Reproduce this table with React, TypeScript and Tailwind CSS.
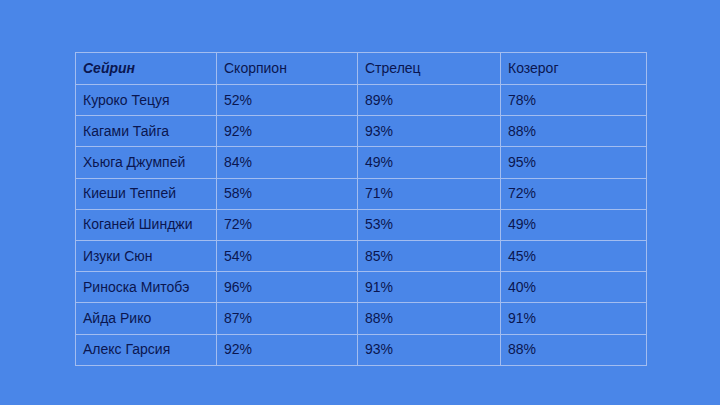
const header = ['Сейрин', 'Скорпион', 'Стрелец', 'Козерог'];

const rows: [string, string, string, string][] = [
  ['Куроко Тецуя', '52%', '89%', '78%'],
  ['Кагами Тайга', '92%', '93%', '88%'],
  ['Хьюга Джумпей', '84%', '49%', '95%'],
  ['Киеши Теппей', '58%', '71%', '72%'],
  ['Коганей Шинджи', '72%', '53%', '49%'],
  ['Изуки Сюн', '54%', '85%', '45%'],
  ['Риноска Митобэ', '96%', '91%', '40%'],
  ['Айда Рико', '87%', '88%', '91%'],
  ['Алекс Гарсия', '92%', '93%', '88%'],
];

export default function App() {
  return (
    <div className="w-[720px] h-[405px] bg-[#4a86e8] pt-[52px] pl-[75px] font-['Liberation_Sans',Arial,sans-serif] text-[14px] text-[#0a1650]">
      <table className="border-collapse border border-[#a3bdf0] w-[571px] table-fixed">
        <colgroup>
          <col className="w-[141px]" />
          <col className="w-[141px]" />
          <col className="w-[143px]" />
          <col className="w-[146px]" />
        </colgroup>
        <thead>
          <tr className="h-[32px]">
            {header.map((h, i) => (
              <th
                key={h}
                className={`border border-[#a3bdf0] px-[7px] text-left align-middle ${
                  i === 0 ? 'font-bold italic' : 'font-normal'
                }`}
              >
                {h}
              </th>
            ))}
          </tr>
        </thead>
        <tbody>
          {rows.map((r) => (
            <tr key={r[0]} className="h-[31.2px]">
              {r.map((c, i) => (
                <td key={i} className="border border-[#a3bdf0] px-[7px] align-middle">
                  {c}
                </td>
              ))}
            </tr>
          ))}
        </tbody>
      </table>
    </div>
  );
}
